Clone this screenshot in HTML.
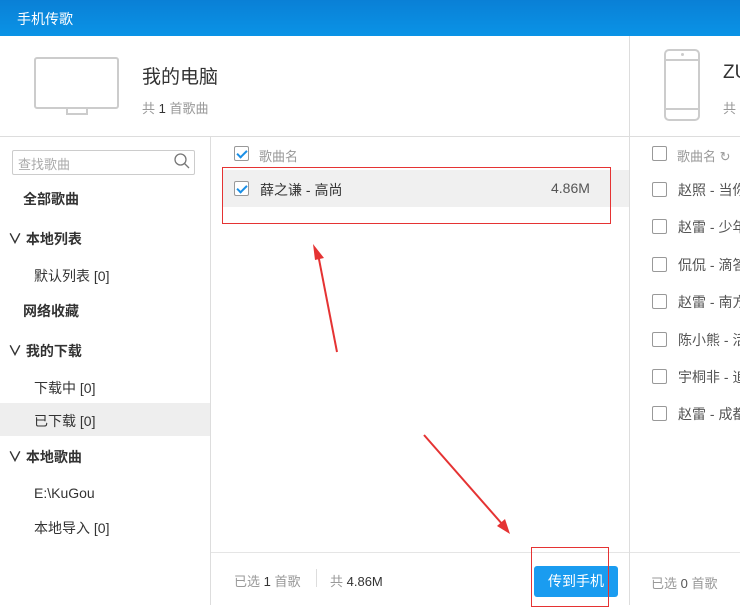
<!DOCTYPE html><html><head><meta charset="utf-8"><style>
*{margin:0;padding:0;box-sizing:border-box}
body{width:740px;height:605px;overflow:hidden;background:#fff;font-family:"Liberation Sans","Noto Sans CJK SC",sans-serif;color:#333;position:relative;font-size:14px}
.a{position:absolute;white-space:nowrap}
.cb{position:absolute;width:15px;height:15px;border:1px solid #999;border-radius:2px;background:#fff}
.cb.on::after{content:"";position:absolute;left:4px;top:1px;width:4px;height:8px;border:solid #1a8fe6;border-width:0 2px 2px 0;transform:rotate(45deg)}
.g{color:#999}
</style></head><body>
<div class="a" style="left:0;top:0;width:740px;height:36px;background:linear-gradient(#0a80d6,#0a93e6)"></div>
<div class="a" style="left:17px;top:9px;color:#fff;font-size:14px">手机传歌</div>
<div class="a" style="left:0;top:136px;width:740px;height:1px;background:#ddd"></div>
<div class="a" style="left:629px;top:36px;width:1px;height:569px;background:#ddd"></div>
<div class="a" style="left:210px;top:137px;width:1px;height:468px;background:#ddd"></div>
<!-- monitor -->
<div class="a" style="left:34px;top:57px;width:85px;height:52px;border:2px solid #ccc;border-radius:3px"></div>
<div class="a" style="left:66px;top:109px;width:22px;height:6px;border:2px solid #ccc;border-top:none"></div>
<div class="a" style="left:142px;top:62px;font-size:19px;color:#333">我的电脑</div>
<div class="a g" style="left:142px;top:98px;font-size:13px">共 <span style="color:#333">1</span> 首歌曲</div>
<!-- phone -->
<div class="a" style="left:664px;top:49px;width:36px;height:72px;border:2px solid #ccc;border-radius:5px"></div>
<div class="a" style="left:664px;top:59px;width:36px;height:2px;background:#ccc"></div>
<div class="a" style="left:664px;top:108px;width:36px;height:2px;background:#ccc"></div>
<div class="a" style="left:681px;top:53px;width:3px;height:3px;border-radius:50%;background:#ccc"></div>
<div class="a" style="left:723px;top:62px;font-size:19px">ZU</div>
<div class="a g" style="left:723px;top:98px;font-size:13px">共</div>
<!-- sidebar -->
<div class="a" style="left:12px;top:150px;width:183px;height:25px;border:1px solid #ccc;border-radius:2px"></div>
<div class="a" style="left:18px;top:154px;color:#aaa;font-size:13px">查找歌曲</div>
<svg class="a" style="left:173px;top:152px" width="18" height="18"><circle cx="7.5" cy="7.5" r="5.5" fill="none" stroke="#777" stroke-width="1.3"/><line x1="11.5" y1="11.5" x2="16" y2="16" stroke="#777" stroke-width="1.3"/></svg>
<div class="a" style="left:23px;top:189px;font-weight:bold">全部歌曲</div>
<div class="a" style="left:8px;top:229px;font-weight:bold">∨ 本地列表</div>
<div class="a" style="left:34px;top:266px">默认列表 [0]</div>
<div class="a" style="left:23px;top:301px;font-weight:bold">网络收藏</div>
<div class="a" style="left:8px;top:341px;font-weight:bold">∨ 我的下载</div>
<div class="a" style="left:34px;top:378px">下载中 [0]</div>
<div class="a" style="left:0;top:403px;width:210px;height:33px;background:#eee"></div>
<div class="a" style="left:34px;top:411px">已下载 [0]</div>
<div class="a" style="left:8px;top:447px;font-weight:bold">∨ 本地歌曲</div>
<div class="a" style="left:34px;top:485px">E:\KuGou</div>
<div class="a" style="left:34px;top:518px">本地导入 [0]</div>
<!-- middle -->
<div class="cb on" style="left:234px;top:146px"></div>
<div class="a g" style="left:259px;top:146px;font-size:13px">歌曲名</div>
<div class="a" style="left:222px;top:170px;width:407px;height:37px;background:#f0f0f0"></div>
<div class="cb on" style="left:234px;top:181px"></div>
<div class="a" style="left:260px;top:180px">薛之谦 - 高尚</div>
<div class="a" style="left:551px;top:180px;color:#555">4.86M</div>
<div class="a" style="left:222px;top:167px;width:389px;height:57px;border:1px solid #e53333"></div>
<div class="a" style="left:211px;top:552px;width:418px;height:1px;background:#e5e5e5"></div>
<div class="a g" style="left:234px;top:571px;font-size:13px">已选 <span style="color:#333">1</span> 首歌</div>
<div class="a" style="left:316px;top:569px;width:1px;height:18px;background:#ddd"></div>
<div class="a g" style="left:330px;top:571px;font-size:13px">共 <span style="color:#333">4.86M</span></div>
<div class="a" style="left:534px;top:566px;width:84px;height:31px;background:#1a9cf0;border-radius:3px;color:#fff;text-align:center;line-height:31px">传到手机</div>
<div class="a" style="left:531px;top:547px;width:78px;height:60px;border:1px solid #e53333"></div>
<svg class="a" style="left:0;top:0" width="740" height="605">
<line x1="337" y1="352" x2="318" y2="254" stroke="#e53333" stroke-width="2"/>
<polygon points="313,244 324,258 315,260" fill="#e53333"/>
<line x1="424" y1="435" x2="503" y2="525" stroke="#e53333" stroke-width="2"/>
<polygon points="510,534 497,526 505,519" fill="#e53333"/>
</svg>
<!-- right -->
<div class="a" style="left:630px;top:552px;width:110px;height:1px;background:#e5e5e5"></div>
<div class="cb" style="left:652px;top:146px"></div>
<div class="a g" style="left:677px;top:146px;font-size:13px">歌曲名 ↻</div>
<div class="cb" style="left:652px;top:182px"></div><div class="a" style="left:678px;top:180px;color:#555">赵照 - 当你</div>
<div class="cb" style="left:652px;top:219px"></div><div class="a" style="left:678px;top:217px;color:#555">赵雷 - 少年</div>
<div class="cb" style="left:652px;top:257px"></div><div class="a" style="left:678px;top:255px;color:#555">侃侃 - 滴答</div>
<div class="cb" style="left:652px;top:294px"></div><div class="a" style="left:678px;top:292px;color:#555">赵雷 - 南方</div>
<div class="cb" style="left:652px;top:332px"></div><div class="a" style="left:678px;top:330px;color:#555">陈小熊 - 活</div>
<div class="cb" style="left:652px;top:369px"></div><div class="a" style="left:678px;top:367px;color:#555">宇桐非 - 追</div>
<div class="cb" style="left:652px;top:406px"></div><div class="a" style="left:678px;top:404px;color:#555">赵雷 - 成都</div>
<div class="a g" style="left:651px;top:573px;font-size:13px">已选 <span style="color:#555">0</span> 首歌</div>
</body></html>
